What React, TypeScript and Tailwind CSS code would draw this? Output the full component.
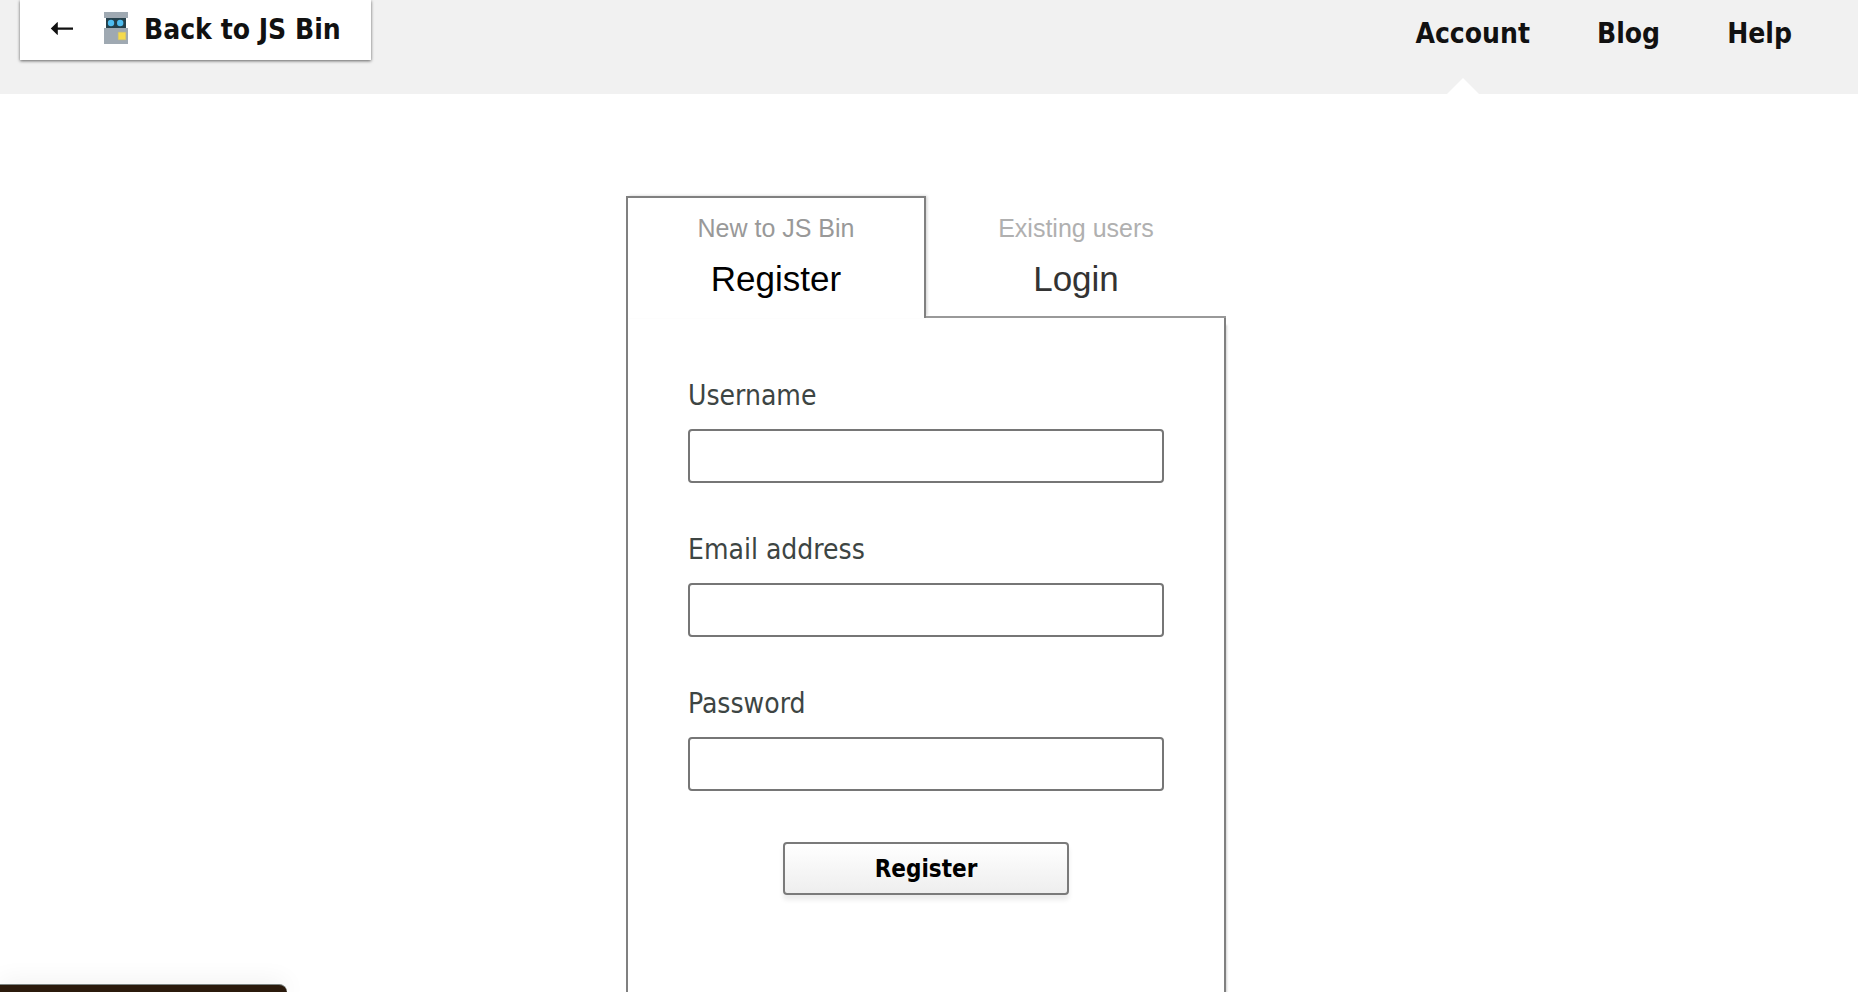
import { useState } from "react";

const navLinks = [
  { label: "Account", current: true },
  { label: "Blog", current: false },
  { label: "Help", current: false },
];

const tabs = [
  { id: "register", hint: "New to JS Bin", title: "Register" },
  { id: "login", hint: "Existing users", title: "Login" },
];

const fields = [
  { id: "username", label: "Username", type: "text" },
  { id: "email", label: "Email address", type: "email" },
  { id: "password", label: "Password", type: "password" },
];

function BinLogo() {
  return (
    <svg className="h-8 w-6" viewBox="0 0 24 32" aria-hidden="true">
      <path fill="#9fa9b2" d="M0 0h24v6H0z" />
      <path fill="#24404b" d="M2 6h20v10H2z" />
      <path fill="#9fa9b2" d="M0 16h24v16H0z" />
      <circle cx="7" cy="11" r="3.2" fill="#4fbdf0" />
      <circle cx="16.2" cy="11" r="3.2" fill="#4fbdf0" />
      <path fill="#f5da4d" stroke="#d9c766" strokeWidth="0.6" d="M14.3 20.3h7.4v7.4h-7.4z" />
    </svg>
  );
}

function BackArrow() {
  return (
    <svg className="h-4 w-6" viewBox="0 0 24 16" aria-hidden="true">
      <path fill="#111" d="M.8 8.5 7.2 2.2q.6-.4.6.3v4.9H23v2.3H7.8v4.8q0 .7-.6.3z" />
    </svg>
  );
}

function Header() {
  return (
    <header className="flex h-[94px] items-start justify-between bg-[#f1f1f1] pr-[66px] pl-5 text-[28px] leading-8 font-bold text-[#111]">
      <a
        href="#back"
        className="flex h-[60px] items-center bg-white pr-[30px] pb-1 pl-[30px] shadow-[0_1px_3px_rgba(0,0,0,0.6)]"
      >
        <BackArrow />
        <span className="ml-[30px]">
          <BinLogo />
        </span>
        <span className="ml-4 pt-1">Back to JS Bin</span>
      </a>
      <nav className="flex h-full gap-[67px] pt-[18px]">
        {navLinks.map((link) => (
          <a key={link.label} href={"#" + link.label.toLowerCase()} className="relative">
            {link.label}
            {link.current && (
              <svg className="absolute bottom-0 left-8 h-4 w-8" viewBox="0 0 32 16" aria-hidden="true">
                <path fill="#fff" d="M0 16 16 0l16 16z" />
              </svg>
            )}
          </a>
        ))}
      </nav>
    </header>
  );
}

export default function App() {
  const [active, setActive] = useState("register");

  return (
    <div className="relative flex min-h-screen flex-col overflow-hidden bg-white font-['DejaVu_Sans_Condensed','DejaVu_Sans',sans-serif]">
      <Header />
      <main className="flex flex-1 flex-col items-center pt-[102px] pr-1.5">
        <div className="flex w-full max-w-[600px] flex-1 flex-col">
          <div className="grid grid-cols-2 font-['Liberation_Sans',sans-serif]" role="tablist">
            {tabs.map((tab) => (
              <button
                key={tab.id}
                type="button"
                role="tab"
                aria-selected={active === tab.id}
                onClick={() => setActive(tab.id)}
                className={
                  active === tab.id
                    ? "flex h-[122px] flex-col items-center border-2 border-b-0 border-[#808080] pt-3.5 text-black shadow-[2px_-1px_3px_-1px_rgba(0,0,0,0.2)]"
                    : "flex h-[122px] flex-col items-center border-b-2 border-[#999] pt-4 text-[#333]"
                }
              >
                <span
                  className={
                    active === tab.id
                      ? "text-[25px] leading-8 text-[#999]"
                      : "text-[25px] leading-8 text-[#b0b0b0]"
                  }
                >
                  {tab.hint}
                </span>
                <span className="mt-[15px] text-[35px] leading-10">{tab.title}</span>
              </button>
            ))}
          </div>
          <form
            onSubmit={(event) => event.preventDefault()}
            className="flex flex-1 flex-col border-x-2 border-[#808080] px-[60px] pt-[62px] pb-16 shadow-[2px_6px_2px_-1px_rgba(0,0,0,0.18)]"
          >
            {fields.map((field) => (
              <div key={field.id} className="mb-[51px] flex flex-col gap-[17px]">
                <label htmlFor={field.id} className="text-[28px] leading-8 text-[#3d4543]">
                  {field.label}
                </label>
                <input
                  id={field.id}
                  type={field.type}
                  className="h-[54px] w-full rounded-[4px] border-2 border-[#767676] bg-white px-3 text-2xl outline-none"
                />
              </div>
            ))}
            <button
              type="submit"
              className="h-[53px] w-[286px] self-center rounded-[4px] border-2 border-[#7a7a7a] bg-linear-to-b from-white to-[#eee] text-2xl font-bold text-black shadow-[0_5px_5px_rgba(0,0,0,0.08)]"
            >
              Register
            </button>
          </form>
        </div>
      </main>
      <div className="absolute bottom-0 left-0 h-2 w-[287px] rounded-tr-lg border-t border-[#7d8583] bg-[#2b1a0c] shadow-[0_0_24px_rgba(0,0,0,0.12)]" />
    </div>
  );
}
